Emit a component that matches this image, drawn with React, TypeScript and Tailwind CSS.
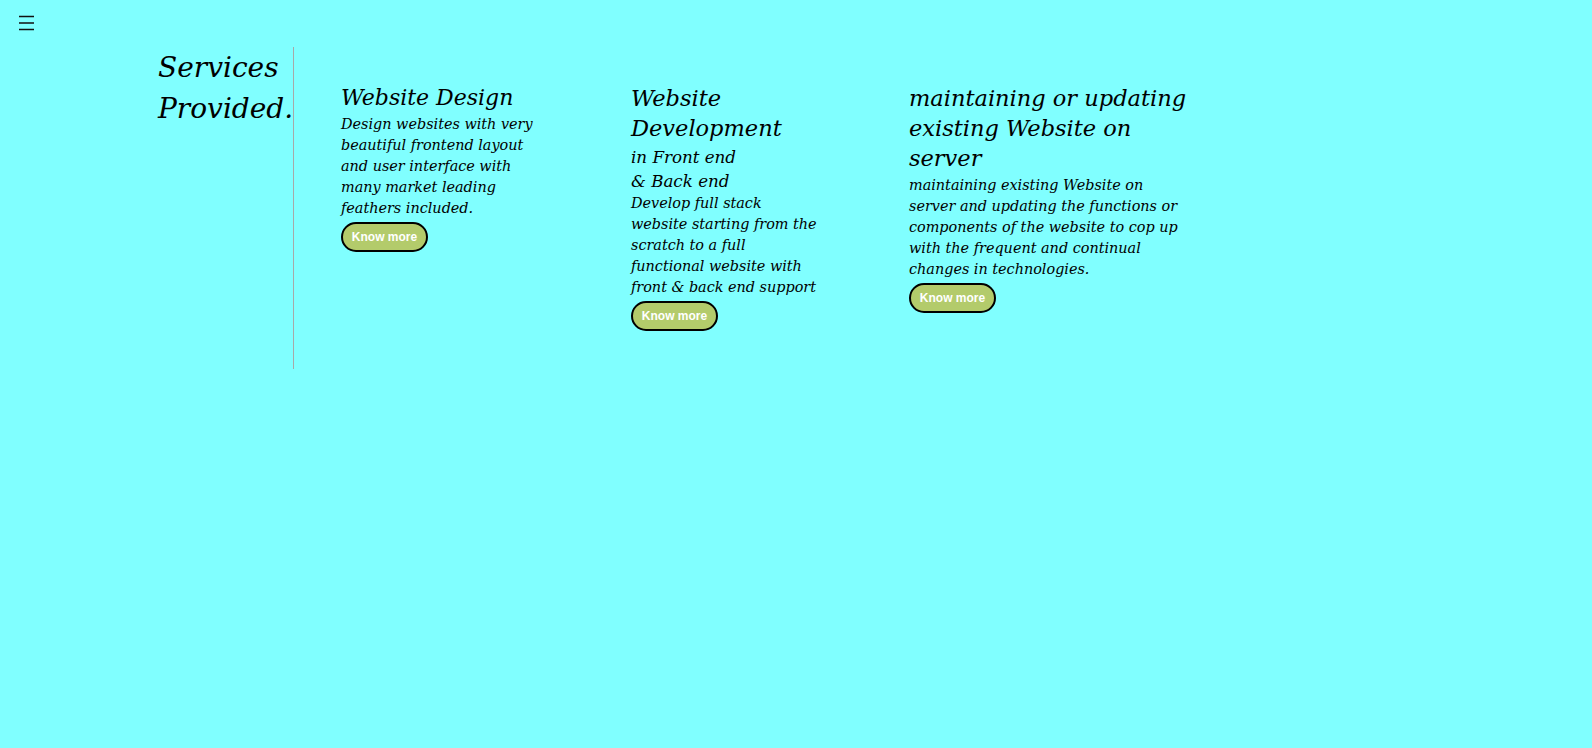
import React from "react";

const serif = { fontFamily: '"DejaVu Serif", serif' };

interface Service {
  title: string[];
  titleClass: string;
  sub?: string[];
  body: string[];
}

const services: Service[] = [
  {
    title: ["Website Design"],
    titleClass: "text-[22px] leading-[26px] mt-[2px] mb-[3px]",
    body: [
      "Design websites with very",
      "beautiful frontend layout",
      "and user interface with",
      "many market leading",
      "feathers included.",
    ],
  },
  {
    title: ["Website", "Development"],
    titleClass: "text-[22.5px] leading-[30px] mb-[2px]",
    sub: ["in Front end", "& Back end"],
    body: [
      "Develop full stack",
      "website starting from the",
      "scratch to a full",
      "functional website with",
      "front & back end support",
    ],
  },
  {
    title: ["maintaining or updating", "existing Website on", "server"],
    titleClass: "text-[22.5px] leading-[30px] mb-[2px]",
    body: [
      "maintaining existing Website on",
      "server and updating the functions or",
      "components of the website to cop up",
      "with the frequent and continual",
      "changes in technologies.",
    ],
  },
];

const KnowMore = () => (
  <button
    type="button"
    className="mt-[3px] h-[30px] w-[87px] rounded-full border-2 border-black bg-[#b3cb6b] text-[12px] font-bold text-white"
    style={{ fontFamily: '"Liberation Sans", Arial, sans-serif' }}
  >
    Know more
  </button>
);

const ServiceColumn: React.FC<{ service: Service; width: string }> = ({
  service,
  width,
}) => (
  <div className={`${width} flex flex-col items-start`}>
    <h2 className={`${service.titleClass} font-normal italic`}>
      {service.title.map((line) => (
        <span key={line} className="block whitespace-nowrap">
          {line}
        </span>
      ))}
    </h2>
    {service.sub && (
      <h3 className="text-[16.7px] leading-[24px] italic">
        {service.sub.map((line) => (
          <span key={line} className="block whitespace-nowrap">
            {line}
          </span>
        ))}
      </h3>
    )}
    <p className="text-[14.4px] leading-[21px] italic">
      {service.body.map((line) => (
        <span key={line} className="block whitespace-nowrap">
          {line}
        </span>
      ))}
    </p>
    <KnowMore />
  </div>
);

export default function App() {
  return (
    <div className="min-h-screen bg-[#80ffff] text-black" style={serif}>
      <header className="pl-[18px] pt-[15px]">
        <button type="button" aria-label="menu" className="block">
          <svg width="17" height="16" viewBox="0 0 17 16">
            <path
              d="M1 1.5h15M1 8h15M1 14.5h15"
              stroke="#111"
              strokeWidth="1.3"
            />
          </svg>
        </button>
      </header>

      <main className="mt-[16px] flex pl-[155px]">
        <div className="h-[322px] w-[139px] border-r border-[#a8a8a8] pl-[3px]">
          <h1 className="text-[28px] leading-[41px] font-normal italic">
            Services
            <br />
            Provided.
          </h1>
        </div>

        <section className="flex pl-[47px] pt-[36px]">
          <ServiceColumn service={services[0]} width="w-[290px]" />
          <ServiceColumn service={services[1]} width="w-[278px]" />
          <ServiceColumn service={services[2]} width="w-[300px]" />
        </section>
      </main>
    </div>
  );
}
